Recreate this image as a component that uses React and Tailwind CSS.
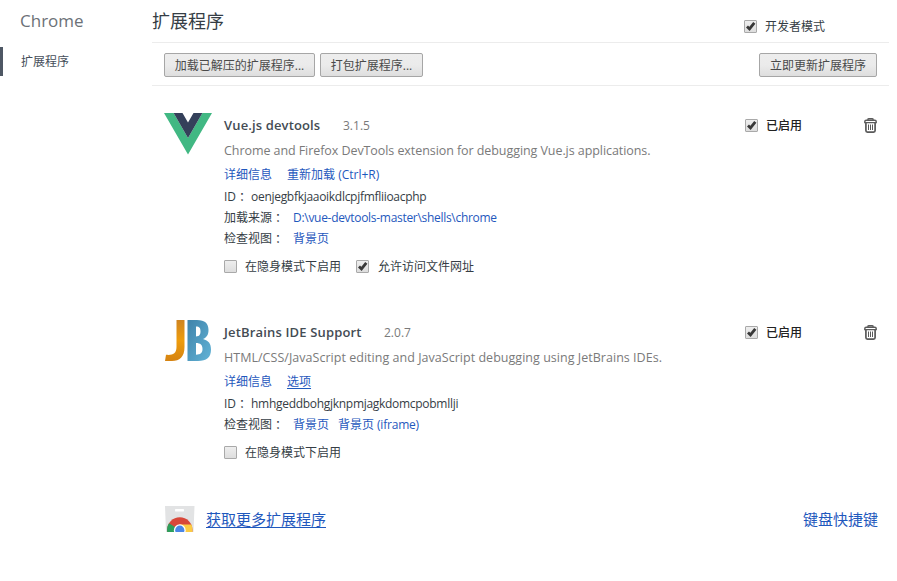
import React from "react";

function Checkbox({ checked }) {
  return (
    <span className="relative block h-[13px] w-[13px] shrink-0 rounded-[1px] border border-[#a9a9a9] bg-gradient-to-b from-[#eeeeee] to-[#dddddd]">
      {checked && (
        <svg className="absolute -left-px -top-px" width="13" height="13" viewBox="0 0 13 13">
          <path d="M3 6.4 L5.5 8.9 L10.3 2.8" fill="none" stroke="#383838" strokeWidth="2.8" />
        </svg>
      )}
    </span>
  );
}

function Button({ children, className }) {
  return (
    <button
      className={`flex h-6 items-center justify-center whitespace-nowrap rounded-[2px] border border-[#a6a6a6] bg-gradient-to-b from-[#ededed] via-[#ebebeb] to-[#dedede] pt-[2px] text-[12px] text-[#4a4a4a] ${className}`}
    >
      {children}
    </button>
  );
}

function TrashIcon() {
  return (
    <svg width="13" height="15" viewBox="0 0 13 15" fill="none" stroke="#5a5a5a">
      <path d="M3.6 1.8 Q4 .8 5 .8 H8 Q9 .8 9.4 1.8" strokeWidth="1.5" />
      <path d="M.8 4.6 V3.6 Q.8 2.2 2.2 2.2 H10.8 Q12.2 2.2 12.2 3.6 V4.6 Z" strokeWidth="1.4" />
      <path d="M1.9 5 V12.6 Q1.9 14.1 3.4 14.1 H9.6 Q11.1 14.1 11.1 12.6 V5" strokeWidth="1.7" />
      <path d="M4.5 6.5 V12 M6.5 6.5 V12 M8.5 6.5 V12" strokeWidth="1" />
    </svg>
  );
}

function VueLogo() {
  return (
    <svg width="48" height="42" viewBox="0 0 48 42">
      <path d="M0 0 H9.6 L24 25 L38.4 0 H48 L24 41.5 Z" fill="#41b883" />
      <path d="M9.6 0 H18.5 L24 9.6 L29.5 0 H38.4 L24 25 Z" fill="#34405a" />
    </svg>
  );
}

function JetBrainsLogo() {
  return (
    <svg width="48" height="42" viewBox="0 0 48 42">
      <defs>
        <linearGradient id="jbOrange" x1="0" y1="0" x2="0" y2="1">
          <stop offset="0" stopColor="#cf8420" />
          <stop offset=".5" stopColor="#ee9c0c" />
          <stop offset="1" stopColor="#d58312" />
        </linearGradient>
        <linearGradient id="jbBlue" x1="0" y1="0" x2="1" y2="1">
          <stop offset="0" stopColor="#3f83aa" />
          <stop offset="1" stopColor="#62b3d6" />
        </linearGradient>
      </defs>
      <path d="M12.5 0 H20.5 V27 C20.5 37 15.5 41 8 41 H1 L2 34.8 C8 35.5 12.5 34 12.5 27 Z" fill="url(#jbOrange)" />
      <path
        fillRule="evenodd"
        d="M23.5 0 H33 C41 0 44.5 3.5 44.5 10 C44.5 15 42.5 17.5 39 19 C44.5 20.5 47 23.5 47 29.5 C47 37.5 42.5 41 34 41 H23.5 Z M32 6.5 V16.5 C35.5 16.5 36.5 14.5 36.5 11.3 C36.5 8 35.5 6.5 32 6.5 Z M32 23 V34.7 C36.5 34.7 38.5 33 38.5 29 C38.5 25 36.5 23 32 23 Z"
        fill="url(#jbBlue)"
      />
    </svg>
  );
}

function StoreIcon() {
  return (
    <svg width="30" height="26" viewBox="0 0 30 26">
      <defs>
        <clipPath id="bag">
          <rect width="30" height="26" />
        </clipPath>
      </defs>
      <path d="M0 0 H29.5 L28.5 26 H1 Z" fill="#e2e3e4" />
      <rect x="10" y="3" width="9" height="2.4" rx=".6" fill="#fff" />
      <g clipPath="url(#bag)">
        <circle cx="14.8" cy="24" r="12.7" fill="#d8473a" />
        <path d="M14.8 24 L4 17.2 C1.8 20.5 1.8 24 2.4 27 H13 Z" fill="#2c9f5c" />
        <path d="M14.8 24 V18.6 H26.3 C27.7 21.5 27.7 24 27.2 27 H14 Z" fill="#fbcb43" />
        <circle cx="14.8" cy="24.2" r="5.9" fill="#fff" />
        <circle cx="14.8" cy="24.2" r="4.6" fill="#4a86e8" />
      </g>
    </svg>
  );
}

function Colon() {
  return <span className="inline-block w-3 font-['Noto_Sans_CJK_TC',sans-serif]" lang="zh-TW">：</span>;
}

function Extension({ logo, name, nameClass, version, description, descriptionClass, action, id, source, views, fileAccess }) {
  return (
    <section className="flex text-[12px] text-[#353d45]">
      <div className="w-[60px] shrink-0 pt-px">{logo}</div>
      <div className="min-w-0 flex-1 whitespace-nowrap">
        <div className="flex h-[26px] items-center pt-[2px]">
          <h2 className={`text-[13px] font-semibold text-[#444c54] ${nameClass}`}>{name}</h2>
          <span className="text-[12px] text-[#7a7a7a]">{version}</span>
        </div>
        <p className={`flex h-6 items-center pt-[2px] text-[12.5px] text-[#7a7a7a] ${descriptionClass}`}>{description}</p>
        <div className="flex h-6 items-center gap-[15px] pt-[2px] text-[#1f58bd]">
          <a>详细信息</a>
          {action}
        </div>
        <div className="flex h-[21px] items-center">
          <span className="w-[12px]">ID</span>
          <Colon />
          <span className="ml-[3px] tracking-[-0.29px]">{id}</span>
        </div>
        {source && (
          <div className="flex h-[21px] items-center">
            加载来源
            <Colon />
            <a className="ml-[9px] text-[#1f58bd] tracking-[-0.3px]">{source}</a>
          </div>
        )}
        <div className="flex h-[21px] items-center">
          检查视图
          <Colon />
          <span className="ml-[9px] flex gap-[9px] text-[#1f58bd]">
            {views.map(({ page, frame }) => (
              <a key={page + frame}>
                {page}
                {frame && <span className="tracking-[-0.2px]"> {frame}</span>}
              </a>
            ))}
          </span>
        </div>
        <div className="mt-[7px] flex h-[21px] items-center">
          <Checkbox />
          <span className="ml-2">在隐身模式下启用</span>
          {fileAccess && (
            <>
              <span className="ml-[15px]">
                <Checkbox checked />
              </span>
              <span className="ml-[9px]">允许访问文件网址</span>
            </>
          )}
        </div>
      </div>
      <div className="flex h-[26px] w-[132px] shrink-0 items-center">
        <Checkbox checked />
        <span className="ml-2 pt-[2px] font-medium text-[#222]">已启用</span>
        <span className="ml-auto">
          <TrashIcon />
        </span>
      </div>
    </section>
  );
}

export default function App() {
  return (
    <div className="flex h-[581px] w-[897px] overflow-hidden bg-white font-['Open_Sans','Noto_Sans_CJK_SC',sans-serif] text-[#353d45]">
      <aside className="w-[152px] shrink-0">
        <div className="flex h-[42px] items-center pl-5 text-[17px] text-[#6c7177]">Chrome</div>
        <div className="mt-[5px] flex h-[29px] items-center border-l-[3px] border-[#4e5764] pl-[18px] text-[12px] text-[#464e5a]">
          扩展程序
        </div>
      </aside>
      <main className="w-[737px] shrink-0">
        <header className="flex h-[43px] items-center border-b border-[#ececec]">
          <h1 className="text-[18px] text-[#353d45]">扩展程序</h1>
          <label className="ml-auto mr-[64px] mt-[10px] flex items-center gap-2 text-[12px]">
            <Checkbox checked />
            <span className="pt-[2px]">开发者模式</span>
          </label>
        </header>
        <div className="flex h-[43px] items-center gap-[5px] border-b border-[#ececec] pl-3 pr-[12px] pt-[2px]">
          <Button className="w-[151px]">加载已解压的扩展程序...</Button>
          <Button className="w-[103px]">打包扩展程序...</Button>
          <Button className="ml-auto w-[118px]">立即更新扩展程序</Button>
        </div>
        <div className="flex flex-col pl-3 pr-[12px] pt-[26px]">
          <Extension
            logo={<VueLogo />}
            name="Vue.js devtools"
            nameClass="w-[119px] tracking-[0.14px]"
            version="3.1.5"
            description="Chrome and Firefox DevTools extension for debugging Vue.js applications."
            descriptionClass="tracking-[-0.07px]"
            action={<a>重新加载 (Ctrl+R)</a>}
            id="oenjegbfkjaaoikdlcpjfmfliioacphp"
            source="D:\vue-devtools-master\shells\chrome"
            views={[{ page: "背景页" }]}
            fileAccess
          />
          <div className="h-[42px]" />
          <Extension
            logo={<JetBrainsLogo />}
            name="JetBrains IDE Support"
            nameClass="w-[160px] tracking-[0.16px]"
            version="2.0.7"
            description="HTML/CSS/JavaScript editing and JavaScript debugging using JetBrains IDEs."
            descriptionClass="tracking-[0.03px]"
            action={<a className="underline underline-offset-2">选项</a>}
            id="hmhgeddbohgjknpmjagkdomcpobmllji"
            views={[{ page: "背景页" }, { page: "背景页", frame: "(iframe)" }]}
          />
        </div>
        <footer className="mt-[42px] flex h-[27px] items-center pl-[13px] pr-[11px] text-[15px] text-[#1f58bd]">
          <StoreIcon />
          <a className="ml-[11px] pt-[2px] underline underline-offset-2">获取更多扩展程序</a>
          <a className="ml-auto pt-[2px]">键盘快捷键</a>
        </footer>
      </main>
    </div>
  );
}
